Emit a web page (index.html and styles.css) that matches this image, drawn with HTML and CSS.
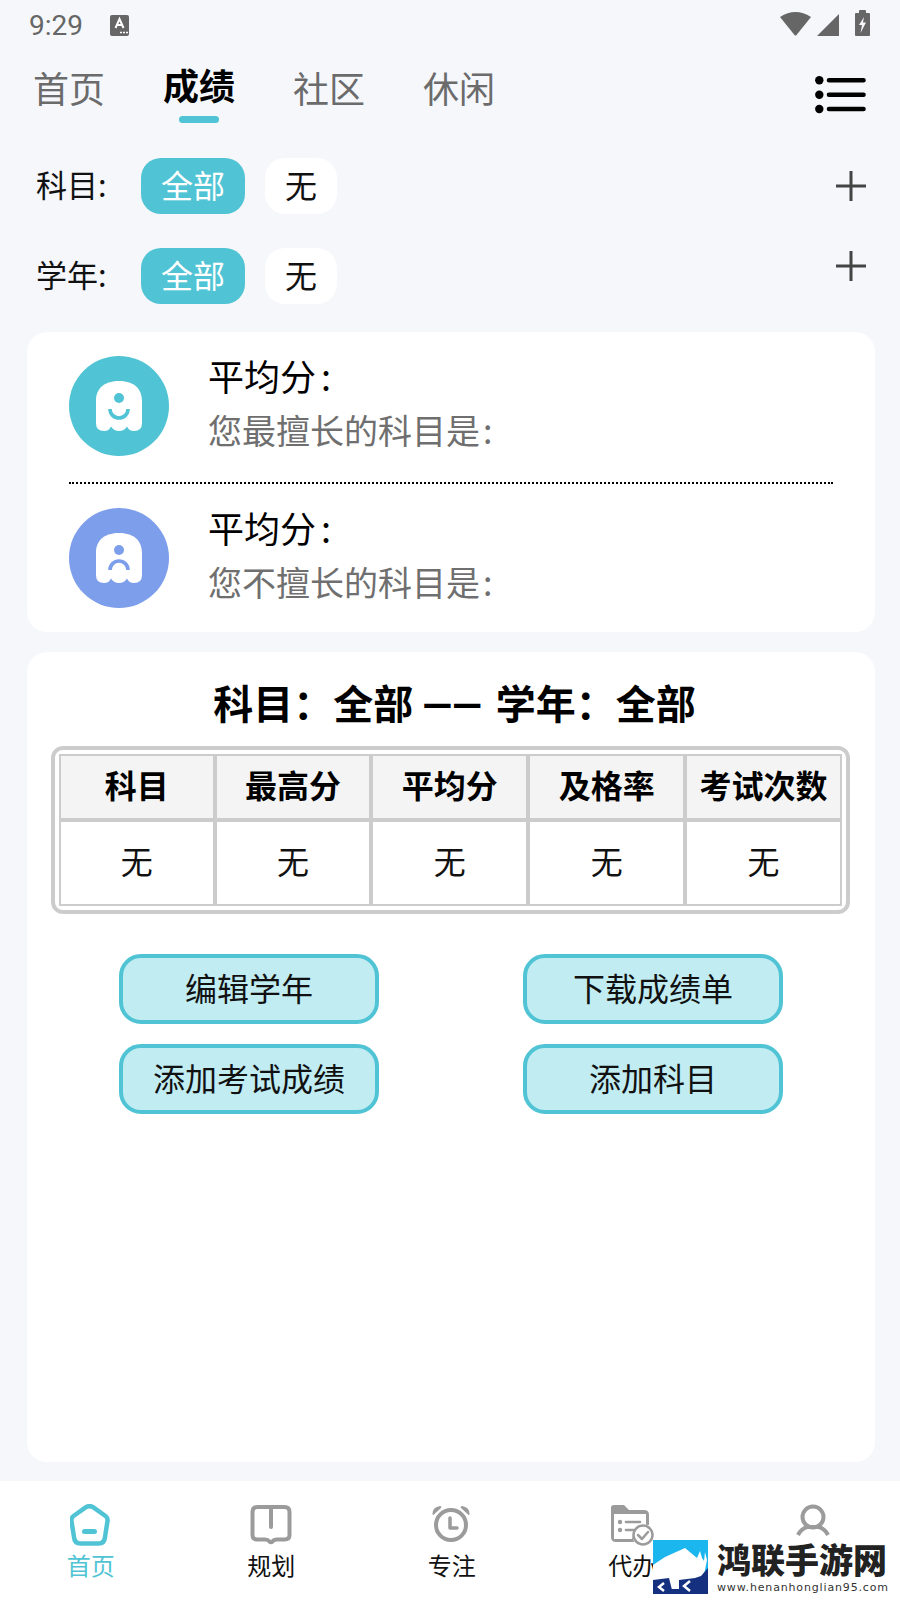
FILE: index.html
```html
<!DOCTYPE html>
<html lang="zh-CN">
<head>
    <meta charset="UTF-8">
    <meta name="viewport" content="width=device-width, initial-scale=1.0">
    <title>成绩</title>
    <link rel="stylesheet" href="styles.css">
</head>
<body>

<div class="app">
    <div class="status-bar">
        <span class="time">9:29</span>
        <svg class="status-a" width="19" height="21" viewBox="0 0 19 21">
            <rect width="19" height="21" rx="2" fill="#666"/>
            <path d="M5.5 13 L9.500 4 L13.500 13 M7 10 H12" fill="none" stroke="#fff" stroke-width="2"/>
            <path d="M10 17.500h2M13 17.500h2M16 17.500h2" stroke="#fff" stroke-width="1.400"/>
        </svg>
        <span class="status-right">
            <svg width="31" height="25" viewBox="0 0 31 25"><path d="M0 6 Q15.500 -4 31 6 L16.500 24 Q15.500 25 14.500 24 Z" fill="#666"/></svg>
            <svg class="signal" width="22" height="22" viewBox="0 0 22 22"><path d="M22 0 V22 H0 Z" fill="#666"/></svg>
            <svg class="battery" width="15" height="26" viewBox="0 0 15 26">
                <path d="M4 3 V1 Q4 0 5 0 H10 Q11 0 11 1 V3 H14 Q15 3 15 4 V25 Q15 26 14 26 H1 Q0 26 0 25 V4 Q0 3 1 3 Z" fill="#666"/>
                <path d="M9 7 L4 15 H7 L5.500 23 L11 12.500 H8 Z" fill="#f5f7fb"/>
            </svg>
        </span>
    </div>

    <div class="tabs">
        <a class="tab">首页</a>
        <a class="tab active">成绩</a>
        <a class="tab">社区</a>
        <a class="tab">休闲</a>
        <svg class="menu-icon" width="51" height="39" viewBox="0 0 51 39">
            <circle cx="4.300" cy="5.300" r="4.200"/><circle cx="4.300" cy="19.800" r="4.200"/><circle cx="4.300" cy="34" r="4.200"/>
            <path d="M14 5.300 H48.500 M14 19.800 H48.500 M14 34 H48.500" stroke="#000" stroke-width="4.600" stroke-linecap="round"/>
        </svg>
    </div>

    <div class="filter first">
        <span class="filter-label">科目:</span>
        <span class="chip on">全部</span>
        <span class="chip">无</span>
        <svg class="plus" width="30" height="30" viewBox="0 0 30 30"><path d="M0 15 H30 M15 0 V30" stroke="#444" stroke-width="3" stroke-linecap="round"/></svg>
    </div>
    <div class="filter second">
        <span class="filter-label">学年:</span>
        <span class="chip on">全部</span>
        <span class="chip">无</span>
        <svg class="plus raised" width="30" height="30" viewBox="0 0 30 30"><path d="M0 15 H30 M15 0 V30" stroke="#444" stroke-width="3" stroke-linecap="round"/></svg>
    </div>

    <div class="card summary">
        <div class="summary-row">
            <div class="avatar teal">
                <svg width="46" height="50" viewBox="0 0 46 50">
                    <path d="M0 20 C0 6 10 0 23 0 C36 0 46 6 46 20 V42 Q46 50 38 50 Q33 50 31 45.500 Q28 50 23 50 Q18 50 15 45.500 Q13 50 8 50 Q0 50 0 42 Z" fill="#fff"/>
                    <circle cx="23" cy="17" r="5" fill="#50c4d4"/>
                    <path d="M14 28 A9 9 0 0 0 32 28" fill="none" stroke="#50c4d4" stroke-width="3.600" stroke-linecap="butt"/>
                </svg>
            </div>
            <div class="summary-text">
                <div class="avg">平均分<span class="colon">:</span></div>
                <div class="note">您最擅长的科目是<span class="colon small">:</span></div>
            </div>
        </div>
        <div class="dots"></div>
        <div class="summary-row">
            <div class="avatar blue">
                <svg width="46" height="50" viewBox="0 0 46 50">
                    <path d="M0 20 C0 6 10 0 23 0 C36 0 46 6 46 20 V42 Q46 50 38 50 Q33 50 31 45.500 Q28 50 23 50 Q18 50 15 45.500 Q13 50 8 50 Q0 50 0 42 Z" fill="#fff"/>
                    <circle cx="23" cy="17" r="5" fill="#7d9eea"/>
                    <path d="M14 37 A9 9 0 0 1 32 37" fill="none" stroke="#7d9eea" stroke-width="3.600" stroke-linecap="butt"/>
                </svg>
            </div>
            <div class="summary-text">
                <div class="avg">平均分<span class="colon">:</span></div>
                <div class="note">您不擅长的科目是<span class="colon small">:</span></div>
            </div>
        </div>
    </div>

    <div class="card scores">
        <h2 class="scores-title">科目：全部 <span class="dash">——</span> 学年：全部</h2>
        <div class="table-wrap">
            <table>
                <tr>
                    <th>科目</th>
                    <th>最高分</th>
                    <th>平均分</th>
                    <th>及格率</th>
                    <th>考试次数</th>
                </tr>
                <tr>
                    <td>无</td>
                    <td>无</td>
                    <td>无</td>
                    <td>无</td>
                    <td>无</td>
                </tr>
            </table>
        </div>
        <div class="actions">
            <button>编辑学年</button>
            <button>下载成绩单</button>
            <button>添加考试成绩</button>
            <button>添加科目</button>
        </div>
    </div>

    <nav class="bottom-nav">
        <div class="nav-item current">
            <svg width="42" height="42" viewBox="1.500 0 42 42">
                <path d="M17.500 3.200 Q21 1 24.500 3.200 L37 12 Q39.500 14 39 17 L36.500 33 Q36 39.500 30 39.500 H12 Q6 39.500 5.500 33 L3 17 Q2.500 14 5 12 Z" fill="none" stroke="#50c4d4" stroke-width="4.500" stroke-linejoin="round"/>
                <path d="M16 27.500 H26" stroke="#50c4d4" stroke-width="5" stroke-linecap="round"/>
            </svg>
            <span>首页</span>
        </div>
        <div class="nav-item">
            <svg width="42" height="42" viewBox="0 0 42 42">
                <path d="M2.500 8 Q2.500 3 7.500 3 H34.500 Q39.500 3 39.500 8 V31 Q39.500 35.500 34.500 35.500 H27 Q24 35.500 22.500 37.500 Q21 39 19.500 37.500 Q18 35.500 15 35.500 H7.500 Q2.500 35.500 2.500 31 Z" fill="none" stroke="#9b9b9b" stroke-width="4"/>
                <path d="M21 5 V23" stroke="#9b9b9b" stroke-width="4" stroke-linecap="round"/>
            </svg>
            <span>规划</span>
        </div>
        <div class="nav-item">
            <svg width="42" height="42" viewBox="0 0 42 42">
                <circle cx="20" cy="21" r="15" fill="none" stroke="#9b9b9b" stroke-width="4"/>
                <path d="M19 14 V24 H26" fill="none" stroke="#9b9b9b" stroke-width="3.500" stroke-linecap="round" stroke-linejoin="round"/>
                <path d="M1.500 10 Q1.500 3 9 2 Q11 2 10 4 L3.500 10 Q1.500 12 1.500 10 Z M38.500 10 Q38.500 3 31 2 Q29 2 30 4 L36.500 10 Q38.500 12 38.500 10 Z" fill="#9b9b9b"/>
            </svg>
            <span>专注</span>
        </div>
        <div class="nav-item">
            <svg width="44" height="42" viewBox="0 0 44 42">
                <path d="M4 1 H14 L19 6 H34 Q39 6 39 11 V21 A13 13 0 0 0 24 38 H6 Q1 38 1 33 V4 Q1 1 4 1 Z" fill="#9b9b9b"/>
                <path d="M4 10 H36 V21 Q26 21 22 35 H4 Z" fill="#fff"/>
                <circle cx="10" cy="18" r="2.200" fill="#9b9b9b"/>
                <circle cx="10" cy="26" r="2.200" fill="#9b9b9b"/>
                <path d="M16 18 H30 M16 26 H24" stroke="#9b9b9b" stroke-width="2.500" stroke-linecap="round"/>
                <circle cx="33" cy="31" r="9.500" fill="#fff" stroke="#9b9b9b" stroke-width="2.500"/>
                <path d="M28 31 L32 35 L38 28" fill="none" stroke="#9b9b9b" stroke-width="2.500" stroke-linecap="round" stroke-linejoin="round"/>
            </svg>
            <span>代办</span>
        </div>
        <div class="nav-item">
            <svg width="42" height="32" viewBox="0 0 42 32">
                <circle cx="21" cy="13" r="10.500" fill="none" stroke="#9b9b9b" stroke-width="4"/>
                <path d="M6 31 Q9 25 15 23 H27 Q33 25 36 31" fill="none" stroke="#9b9b9b" stroke-width="4"/>
            </svg>
        </div>
    </nav>

    <div class="watermark">
        <svg width="55" height="54" viewBox="0 0 55 54">
            <rect width="55" height="54" fill="#1cb6ee"/>
            <path d="M0 25 L12 17 L32 8 L44 18 L47 11 L49 18 L51 21 L52 12 L54 20 L52 30 L50 38 L44 54 H0 Z" fill="#fff"/>
            <path d="M0 40 L16 38 L20 54 H0 Z" fill="#14307f"/>
            <path d="M26 40 L42 38 L48 36 L55 28 V54 H0 V49 H26 Z" fill="#14307f"/>
            <path d="M11 43 L6 47 L11 51 M37 41 L31 46 L37 51" fill="none" stroke="#fff" stroke-width="2.500"/>
        </svg>
        <div class="watermark-text">
            <div class="watermark-name">鸿联手游网</div>
            <div class="watermark-url">www.henanhonglian95.com</div>
        </div>
    </div>
</div>

</body>
</html>
```

FILE: styles.css
```css
* {
    box-sizing: border-box;
}
body {
    margin: 0;
    font-family: "Noto Sans CJK SC", "Noto Sans", sans-serif;
    background-color: #f5f7fb;
}
.app {
    position: relative;
    width: 900px;
    height: 1600px;
    overflow: hidden;
    display: flex;
    flex-direction: column;
}

/* status bar */
.status-bar {
    height: 50px;
    display: flex;
    align-items: center;
    padding: 0 30px 0 29px;
    flex-shrink: 0;
}
.time {
    font-family: Roboto, sans-serif;
    font-size: 28px;
    color: #666;
}
.status-a {
    margin-left: 27px;
}
.status-right {
    margin-left: auto;
    margin-bottom: 4px;
    display: flex;
    align-items: flex-end;
}
.signal {
    margin-left: 6px;
}
.battery {
    margin-left: 16px;
}

/* top tabs */
.tabs {
    height: 82px;
    padding: 0 0 0 33px;
    display: flex;
    gap: 58px;
    position: relative;
    flex-shrink: 0;
}
.tab {
    width: 72px;
    font-size: 36px;
    line-height: 50px;
    color: #6b6b6b;
    position: relative;
    white-space: nowrap;
    margin-top: 12px;
}
.tab.active {
    color: #000;
    font-weight: bold;
    margin-top: 9px;
}
.tab.active::after {
    content: "";
    position: absolute;
    left: 16px;
    top: 57px;
    width: 40px;
    height: 7px;
    border-radius: 4px;
    background-color: #50c4d4;
}
.menu-icon {
    margin: 25px 34px 0 auto;
}

/* filters */
.filter {
    display: flex;
    align-items: center;
    height: 56px;
    padding: 0 34px 0 36px;
    flex-shrink: 0;
}
.filter.first {
    margin-top: 26px;
}
.filter.second {
    margin-top: 34px;
}
.filter-label {
    width: 105px;
    padding-bottom: 5px;
    font-size: 31px;
    color: #111;
}
.chip {
    height: 56px;
    padding: 0 20px;
    margin-right: 20px;
    border-radius: 20px;
    background-color: #fff;
    font-size: 32px;
    line-height: 52px;
    color: #111;
}
.chip.on {
    background-color: #50c4d4;
    color: #fff;
}
.plus {
    margin-left: auto;
}
.plus.raised {
    margin-bottom: 20px;
}

/* cards */
.card {
    margin: 0 25px 0 27px;
    background-color: #fff;
    border-radius: 20px;
    flex-shrink: 0;
}
.summary {
    margin-top: 28px;
    height: 300px;
    padding: 24px 42px 0;
}
.summary-row {
    display: flex;
    gap: 39px;
    height: 100px;
}
.avatar {
    width: 100px;
    height: 100px;
    border-radius: 50%;
    display: flex;
    align-items: center;
    justify-content: center;
}
.avatar.teal {
    background-color: #50c4d4;
}
.avatar.blue {
    background-color: #7d9eea;
}
.summary-text {
    display: flex;
    flex-direction: column;
}
.avg {
    font-size: 36px;
    line-height: 38px;
    color: #000;
}
.note {
    font-size: 34px;
    line-height: 48px;
    margin-top: 12px;
    color: #6f6f6f;
}
.colon {
    margin-left: 5px;
}
.colon.small {
    margin-left: 3px;
}
.dots {
    margin: 26px 0 24px;
    height: 0;
    border-top: 2px dotted #000;
}

.scores {
    margin-top: 20px;
    height: 810px;
    padding: 22px 25px 0 24px;
}
.scores-title {
    margin: 0;
    height: 56px;
    padding-left: 8px;
    font-size: 40px;
    line-height: 56px;
    text-align: center;
    color: #000;
}
.dash {
    font-family: Roboto, sans-serif;
    font-size: 39px;
    margin-right: 5px;
}
.table-wrap {
    margin-top: 16px;
    border: 4px solid #ccc;
    border-radius: 12px;
    padding: 4px;
}
table {
    width: 100%;
    border-spacing: 0;
    table-layout: fixed;
}
th, td {
    border: 2px solid #ccc;
    padding: 0 0 6px;
    text-align: center;
    font-size: 32px;
    color: #000;
}
th {
    height: 66px;
    background-color: #f4f4f4;
    font-weight: bold;
}
th:first-child {
    width: 155.5px;
}
td {
    height: 86px;
    color: #111;
}

.actions {
    margin-top: 40px;
    padding: 0 67px 0 68px;
    display: grid;
    grid-template-columns: 260px 260px;
    justify-content: space-between;
    row-gap: 20px;
}
button {
    height: 70px;
    padding: 0 0 4px;
    border: 4px solid #50c4d4;
    border-radius: 22px;
    background-color: #c0ecf2;
    font-family: inherit;
    font-size: 32px;
    color: #111;
}

/* bottom nav */
.bottom-nav {
    margin-top: 19px;
    flex: 1;
    padding-left: 0.5px;
    background-color: #fff;
    display: flex;
}
.nav-item {
    flex: 0 0 180.5px;
    display: flex;
    flex-direction: column;
    align-items: center;
    padding-top: 23px;
    font-size: 24px;
    line-height: 34px;
    color: #111;
}
.nav-item svg {
    margin-bottom: 2px;
}
.nav-item.current {
    color: #50c4d4;
}

/* site watermark over the corner of the page */
.watermark {
    position: absolute;
    left: 653px;
    top: 1540px;
    display: flex;
    gap: 9px;
}
.watermark-text {
    width: 183px;
}
.watermark-name {
    font-weight: 900;
    font-size: 34px;
    line-height: 38px;
    color: #222;
}
.watermark-url {
    margin-top: 3px;
    font-family: "DejaVu Sans", sans-serif;
    font-size: 11px;
    line-height: 14px;
    letter-spacing: 0.850px;
    color: #333;
}
```
